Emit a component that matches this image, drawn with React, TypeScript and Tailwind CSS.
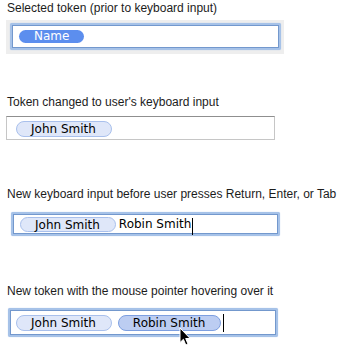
import React from "react";

function Label({ children, className = "" }: { children: React.ReactNode; className?: string }) {
  return (
    <div className={`pl-[7px] text-[12px] leading-[14px] text-[#1c1c1c] ${className}`}>
      {children}
    </div>
  );
}

function Token({ name, hover = false }: { name: string; hover?: boolean }) {
  return (
    <div
      className={`flex items-center rounded-full border font-['DejaVu_Sans'] text-[12px] leading-[14px] text-black ${
        hover ? "bg-[#bccdf2] border-[#7d9fe0] pl-[14px] pr-[15px]" : "bg-[#dfe7f9] border-[#a9c0ec] pl-[14px] pr-[15px]"
      }`}
    >
      {name}
    </div>
  );
}

function Pointer() {
  return (
    <svg className="absolute left-[179px] top-[327px]" width="13" height="20" viewBox="0 0 13 20">
      <path
        d="M1 1 L1 15.5 L4.4 12.3 L6.8 18 L9 17 L6.7 11.5 L11.2 11.5 Z"
        fill="#000"
        stroke="#fff"
        strokeWidth="1"
        strokeLinejoin="round"
      />
    </svg>
  );
}

export default function App() {
  return (
    <div className="relative w-[338px] h-[353px] bg-white font-['Liberation_Sans',Arial,sans-serif] overflow-hidden">
      <Label className="pt-[1px]">Selected token (prior to keyboard input)</Label>
      <div className="mt-[5px] ml-[6px] w-[278px] h-[34px] bg-[#eeeeee] pt-[3px] pl-[4px]">
        <div className="w-[271px] h-[27px] rounded-[2px] bg-[#a6c2e8] p-[2px] shadow-[0_0_1px_#a6c2e8]">
          <div className="flex h-full items-start border border-[#7398cd] bg-white pl-[6px] pt-[4px]">
            <div className="flex h-[13px] items-center rounded-full bg-[#5c8eee] px-[15px] font-['DejaVu_Sans'] text-[12px] leading-[13px] text-white">
              Name
            </div>
          </div>
        </div>
      </div>

      <Label className="mt-[41px]">Token changed to user's keyboard input</Label>
      <div className="mt-[7px] ml-[6px] flex w-[269px] h-[24px] items-start border border-[#c6c6c6] border-t-[#8f8f8f] bg-white pl-[9px] pt-[4px]">
        <div className="flex h-[16px]">
          <Token name="John Smith" />
        </div>
      </div>

      <Label className="mt-[47px]">New keyboard input before user presses Return, Enter, or Tab</Label>
      <div className="mt-[11px] ml-[11px] w-[269px] h-[24px] rounded-[2px] bg-[#a6c2e8] p-[2px] shadow-[0_0_1px_#a6c2e8]">
        <div className="flex h-full items-start border border-[#7398cd] bg-white pl-[6px] pt-[2px]">
          <div className="flex h-[15px]">
            <Token name="John Smith" />
          </div>
          <span className="ml-[3px] font-['DejaVu_Sans'] text-[12px] leading-[15px] text-black">Robin Smith</span>
          <span className="ml-[1px] mt-[1px] h-[17px] w-px bg-black" />
        </div>
      </div>

      <Label className="mt-[48px]">New token with the mouse pointer hovering over it</Label>
      <div className="mt-[10px] ml-[8px] w-[270px] h-[29px] rounded-[2px] bg-[#a6c2e8] p-[2px] shadow-[0_0_1px_#a6c2e8]">
        <div className="flex h-full items-start border border-[#7398cd] bg-white pl-[5px] pt-[4px]">
          <div className="flex h-[16px]">
            <Token name="John Smith" />
          </div>
          <div className="ml-[6px] flex h-[16px]">
            <Token name="Robin Smith" hover />
          </div>
          <span className="ml-[2px] mt-[-1px] h-[18px] w-px bg-black" />
        </div>
      </div>

      <Pointer />
    </div>
  );
}
